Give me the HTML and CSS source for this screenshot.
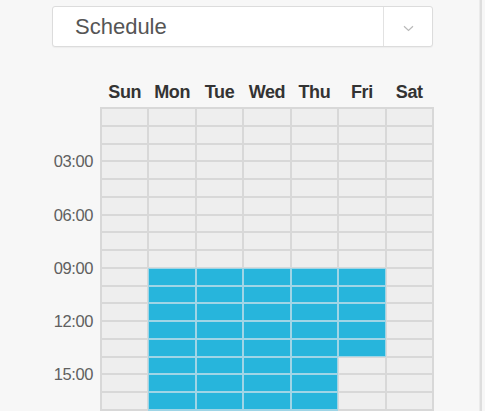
FILE: index.html
```html
<!DOCTYPE html>
<html>
<head>
<meta charset="utf-8">
<link rel="stylesheet" href="styles.css">
</head>
<body>
<div class="page">
  <div class="panel">
    <div class="select">
      <span class="select-text">Schedule</span>
      <span class="select-btn">
        <svg width="11" height="7" viewBox="0 0 11 7"><path d="M1 1.2 L5.5 5.4 L10 1.2" fill="none" stroke="#b9b9b9" stroke-width="1.2"/></svg>
      </span>
    </div>
    <div class="days">
      <span>Sun</span><span>Mon</span><span>Tue</span><span>Wed</span><span>Thu</span><span>Fri</span><span>Sat</span>
    </div>
    <div class="sched">
      <div class="times">
        <span class="t t3">03:00</span>
        <span class="t t6">06:00</span>
        <span class="t t9">09:00</span>
        <span class="t t12">12:00</span>
        <span class="t t15">15:00</span>
      </div>
      <div class="cells">
        <span class="c"></span><span class="c"></span><span class="c"></span><span class="c"></span><span class="c"></span><span class="c"></span><span class="c"></span>
        <span class="c"></span><span class="c"></span><span class="c"></span><span class="c"></span><span class="c"></span><span class="c"></span><span class="c"></span>
        <span class="c"></span><span class="c"></span><span class="c"></span><span class="c"></span><span class="c"></span><span class="c"></span><span class="c"></span>
        <span class="c"></span><span class="c"></span><span class="c"></span><span class="c"></span><span class="c"></span><span class="c"></span><span class="c"></span>
        <span class="c"></span><span class="c"></span><span class="c"></span><span class="c"></span><span class="c"></span><span class="c"></span><span class="c"></span>
        <span class="c"></span><span class="c"></span><span class="c"></span><span class="c"></span><span class="c"></span><span class="c"></span><span class="c"></span>
        <span class="c"></span><span class="c"></span><span class="c"></span><span class="c"></span><span class="c"></span><span class="c"></span><span class="c"></span>
        <span class="c"></span><span class="c"></span><span class="c"></span><span class="c"></span><span class="c"></span><span class="c"></span><span class="c"></span>
        <span class="c"></span><span class="c"></span><span class="c"></span><span class="c"></span><span class="c"></span><span class="c"></span><span class="c"></span>
        <span class="c"></span><span class="c on"></span><span class="c on"></span><span class="c on"></span><span class="c on"></span><span class="c on"></span><span class="c"></span>
        <span class="c"></span><span class="c on"></span><span class="c on"></span><span class="c on"></span><span class="c on"></span><span class="c on"></span><span class="c"></span>
        <span class="c"></span><span class="c on"></span><span class="c on"></span><span class="c on"></span><span class="c on"></span><span class="c on"></span><span class="c"></span>
        <span class="c"></span><span class="c on"></span><span class="c on"></span><span class="c on"></span><span class="c on"></span><span class="c on"></span><span class="c"></span>
        <span class="c"></span><span class="c on"></span><span class="c on"></span><span class="c on"></span><span class="c on"></span><span class="c on"></span><span class="c"></span>
        <span class="c"></span><span class="c on"></span><span class="c on"></span><span class="c on"></span><span class="c on"></span><span class="c"></span><span class="c"></span>
        <span class="c"></span><span class="c on"></span><span class="c on"></span><span class="c on"></span><span class="c on"></span><span class="c"></span><span class="c"></span>
        <span class="c"></span><span class="c on"></span><span class="c on"></span><span class="c on"></span><span class="c on"></span><span class="c"></span><span class="c"></span>
        <span class="c"></span><span class="c on"></span><span class="c on"></span><span class="c on"></span><span class="c on"></span><span class="c"></span><span class="c"></span>
      </div>
    </div>
  </div>
  <div class="edge"></div>
</div>
</body>
</html>
```

FILE: styles.css
```css
html, body {
  margin: 0;
  padding: 0;
  background: #f7f7f7;
  overflow: hidden;
}
body {
  width: 485px;
  height: 411px;
  font-family: "Liberation Sans", Arial, sans-serif;
}
.page {
  display: flex;
  height: 411px;
}
.panel {
  width: 479px;
  padding: 6px 0 0 52px;
  box-sizing: border-box;
}
.edge {
  width: 2px;
  background: #dedede;
  border-left: 1px solid #ebebeb;
}
.select {
  width: 381px;
  height: 41px;
  box-sizing: border-box;
  display: flex;
  align-items: center;
  background: #fff;
  border: 1px solid #dcdcdc;
  border-radius: 3px;
  box-shadow: 0 1px 1px rgba(0,0,0,0.04);
}
.select-text {
  flex: 1;
  padding-left: 22px;
  font-size: 22px;
  color: #555;
}
.select-btn {
  width: 48px;
  height: 100%;
  border-left: 1px solid #e2e2e2;
  display: flex;
  align-items: center;
  justify-content: center;
}
.select-btn svg {
  margin-top: 3px;
}
.days {
  margin: 35px 0 5px 48px;
  width: 334px;
  box-sizing: border-box;
  padding: 0 2px;
  display: grid;
  grid-template-columns: repeat(7, 1fr);
  column-gap: 2px;
  font-weight: bold;
  font-size: 18px;
  line-height: 20px;
  letter-spacing: -0.4px;
  color: #333;
  text-align: center;
}
.sched {
  display: flex;
}
.times {
  width: 48px;
  box-sizing: border-box;
  padding: 2px 7px 0 0;
  display: grid;
  grid-template-rows: repeat(18, 15.78px);
  row-gap: 2px;
  font-size: 16.5px;
  color: #606060;
  letter-spacing: -0.4px;
}
.t {
  align-self: center;
  text-align: right;
  line-height: 18px;
}
.t3 { grid-row: 3 / span 2; }
.t6 { grid-row: 6 / span 2; }
.t9 { grid-row: 9 / span 2; }
.t12 { grid-row: 12 / span 2; }
.t15 { grid-row: 15 / span 2; }
.cells {
  width: 334px;
  box-sizing: border-box;
  padding: 2px;
  display: grid;
  grid-template-columns: repeat(7, 1fr);
  grid-auto-rows: 15.78px;
  gap: 2px;
  background: #d8d8d8;
  align-self: flex-start;
}
.c {
  background: #eeeeee;
}
.c.on {
  background: #27b5dc;
  outline: 1px solid #9fd5e6;
}
```
